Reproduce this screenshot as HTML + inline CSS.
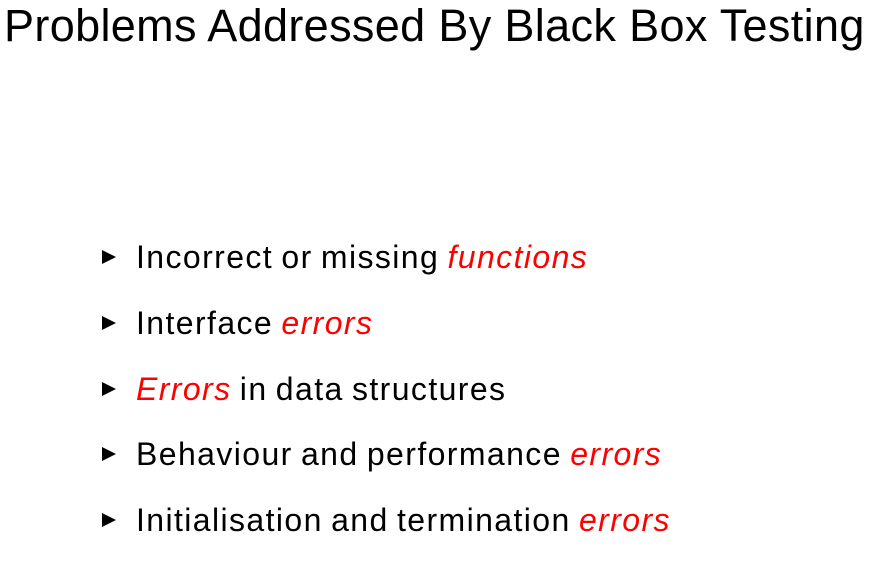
<!DOCTYPE html>
<html><head><style>
body{margin:0;width:877px;height:568px;background:#fff;overflow:hidden;font-family:"Liberation Sans",Arial,sans-serif;position:relative}
h1{position:absolute;left:4px;top:0;margin:0;font-weight:normal;font-size:45px;line-height:52px;white-space:nowrap;letter-spacing:0.35px}
.li{position:absolute;left:136px;font-size:32px;line-height:36px;white-space:nowrap;letter-spacing:1.4px;word-spacing:-2px}
.li em{color:#f00}
.b{position:absolute;left:-34px;top:11px;width:0;height:0;border-left:14px solid #000;border-top:7px solid transparent;border-bottom:7px solid transparent}
</style></head><body>
<h1>Problems Addressed By Black Box Testing</h1>
<div class="li" style="top:239px"><span class="b"></span>Incorrect or missing <em>functions</em></div>
<div class="li" style="top:305px"><span class="b"></span>Interface <em>errors</em></div>
<div class="li" style="top:371px"><span class="b"></span><em>Errors</em> in data structures</div>
<div class="li" style="top:436px"><span class="b"></span>Behaviour and performance <em>errors</em></div>
<div class="li" style="top:502px"><span class="b"></span>Initialisation and termination <em>errors</em></div>
</body></html>
